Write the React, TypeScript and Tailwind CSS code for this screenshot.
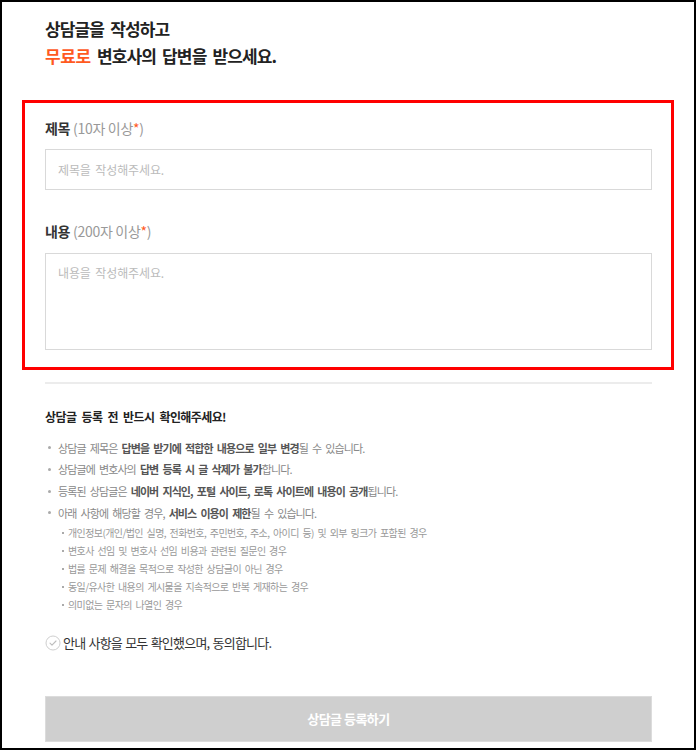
import React from 'react';

const notices: { parts: [string, boolean][] }[] = [
  { parts: [['상담글 제목은 ', false], ['답변을 받기에 적합한 내용으로 일부 변경', true], ['될 수 있습니다.', false]] },
  { parts: [['상담글에 변호사의 ', false], ['답변 등록 시 글 삭제가 불가', true], ['합니다.', false]] },
  { parts: [['등록된 상담글은 ', false], ['네이버 지식인, 포털 사이트, 로톡 사이트에 내용이 공개', true], ['됩니다.', false]] },
  { parts: [['아래 사항에 해당할 경우, ', false], ['서비스 이용이 제한', true], ['될 수 있습니다.', false]] },
];

const limits = [
  '개인정보(개인/법인 실명, 전화번호, 주민번호, 주소, 아이디 등) 및 외부 링크가 포함된 경우',
  '변호사 선임 및 변호사 선임 비용과 관련된 질문인 경우',
  '법률 문제 해결을 목적으로 작성한 상담글이 아닌 경우',
  '동일/유사한 내용의 게시물을 지속적으로 반복 게재하는 경우',
  '의미없는 문자의 나열인 경우',
];

export default function App() {
  return (
    <div
      className="w-[696px] h-[750px] border-2 border-black bg-white overflow-hidden pl-[43px] pr-[42px]"
      style={{ fontFamily: '"Noto Sans CJK KR", "Noto Sans", sans-serif' }}
    >
      {/* Title */}
      <h1 className="pt-[13px] text-[17px] leading-[27px] font-bold text-[#222] tracking-[-0.05em] [word-spacing:3px]">
        상담글을 작성하고
        <br />
        <span className="text-[#ff5a1f] tracking-[-0.02em]">무료로</span> 변호사의 답변을 받으세요.
      </h1>

      {/* Form (highlighted) */}
      <div className="mt-[31px] -ml-[23px] -mr-[22px] border-[3px] border-[#ff0000] pl-[20px] pr-[19px] pt-[15px] pb-[17px]">
        <label className="block text-[14px] leading-[20px] font-bold text-[#333] tracking-[-0.3px]">
          제목 <span className="font-normal text-[#999]">(10자 이상<span className="text-[#ff5a1f]">*</span>)</span>
        </label>
        <input
          type="text"
          placeholder="제목을 작성해주세요."
          className="mt-[11px] block w-full h-[41px] border border-[#d9d9d9] px-[12px] text-[12px] tracking-[-0.01em] [word-spacing:2px] text-[#333] placeholder:text-[#bbb] outline-none"
        />

        <label className="mt-[31px] block text-[14px] leading-[20px] font-bold text-[#333] tracking-[-0.3px]">
          내용 <span className="font-normal text-[#999]">(200자 이상<span className="text-[#ff5a1f]">*</span>)</span>
        </label>
        <textarea
          placeholder="내용을 작성해주세요."
          className="mt-[12px] block w-full h-[97px] resize-none border border-[#d9d9d9] px-[12px] py-[10px] text-[12px] leading-[18px] tracking-[-0.01em] [word-spacing:2px] text-[#333] placeholder:text-[#bbb] outline-none"
        />
      </div>

      <div className="mt-[12px] h-[2px] bg-[#ececec]" />

      {/* Notices */}
      <h2 className="mt-[24px] text-[12px] leading-[18px] font-bold text-[#222] tracking-[-0.05em] [word-spacing:3px]">
        상담글 등록 전 반드시 확인해주세요!
      </h2>

      <ul className="mt-[11px]">
        {notices.map((n, i) => (
          <li key={i} className="flex items-center h-[21.7px] text-[11px] text-[#888] tracking-[-0.9px] [word-spacing:2.5px]">
            <span className="ml-[3px] mr-[7px] w-[3px] h-[3px] rounded-full bg-[#aaa] shrink-0" />
            <span className="whitespace-nowrap">
              {n.parts.map(([t, b], j) =>
                b ? (
                  <span key={j} className="font-bold text-[#555]">{t}</span>
                ) : (
                  <span key={j}>{t}</span>
                )
              )}
            </span>
          </li>
        ))}
      </ul>

      <ul>
        {limits.map((t, i) => (
          <li key={i} className="flex items-center h-[18px] text-[10px] text-[#999] tracking-[-0.6px] [word-spacing:2px]">
            <span className="ml-[17px] mr-[4px] w-[2px] h-[2px] bg-[#aaa] shrink-0" />
            <span className="whitespace-nowrap">{t}</span>
          </li>
        ))}
      </ul>

      {/* Agree */}
      <label className="mt-[21px] flex items-center h-[16px] gap-[2px] cursor-pointer">
        <svg width="16" height="16" viewBox="0 0 16 16" fill="none" className="shrink-0">
          <circle cx="8" cy="8" r="7" stroke="#cfcfcf" strokeWidth="1" />
          <path d="M5 8.2l2 2 4-4.2" stroke="#bdbdbd" strokeWidth="1.1" strokeLinecap="round" strokeLinejoin="round" />
        </svg>
        <span className="text-[13px] text-[#333] tracking-[-0.06em] [word-spacing:1px]">안내 사항을 모두 확인했으며, 동의합니다.</span>
      </label>

      {/* Submit */}
      <button
        disabled
        className="mt-[45px] w-full h-[46px] bg-[#cfcfcf] border border-[#dcdcdc] text-white text-[13px] font-bold tracking-[-0.04em]"
      >
        상담글 등록하기
      </button>
    </div>
  );
}
